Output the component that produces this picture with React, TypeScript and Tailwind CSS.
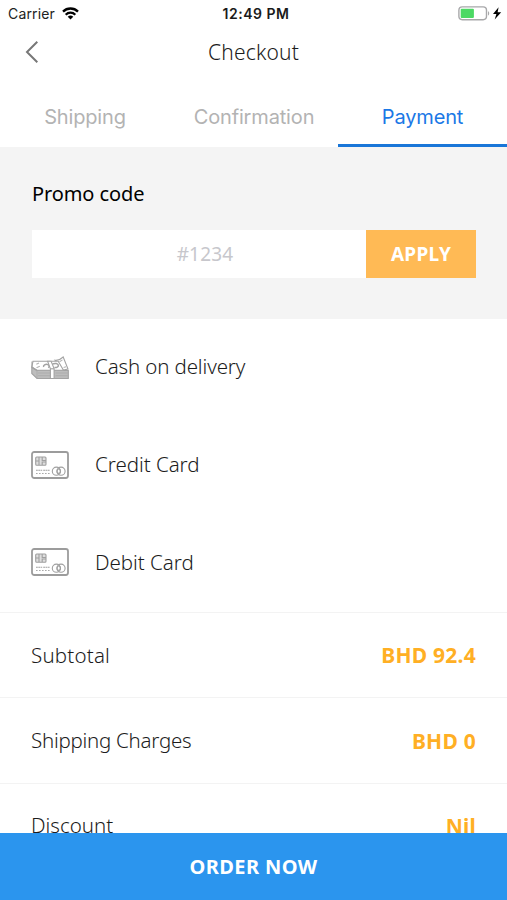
import React from "react";

const paymentMethods = [
  { name: "Cash on delivery", icon: CashIcon, tracking: "tracking-[-0.13px]" },
  { name: "Credit Card", icon: CardIcon, tracking: "tracking-[-0.03px]" },
  { name: "Debit Card", icon: CardIcon, tracking: "tracking-[-0.03px]" },
];

const totals = [
  { label: "Subtotal", value: "BHD 92.4", tracking: "tracking-[0.2px]" },
  { label: "Shipping Charges", value: "BHD 0", tracking: "tracking-[-0.25px]" },
  { label: "Discount", value: "Nil", tracking: "tracking-[0px]" },
];

function WifiIcon() {
  return (
    <svg className="h-[13px] w-[17px]" viewBox="0 0 17 13" fill="none" stroke="#000" strokeWidth="2.3">
      <path d="M1 4.6a10.6 10.6 0 0 1 15 0" />
      <path d="M3.7 7.7a6.8 6.8 0 0 1 9.6 0" />
      <path d="M8.5 12.6 5.7 9.8a4 4 0 0 1 5.6 0z" fill="#000" stroke="none" />
    </svg>
  );
}

function BatteryIcon() {
  return (
    <svg className="h-[16px] w-[44px]" viewBox="0 0 44 16" fill="none">
      <rect x="0.9" y="0.9" width="27.6" height="12.8" rx="3.4" stroke="#a8a8aa" strokeWidth="1.4" />
      <rect x="2.7" y="2.7" width="13.2" height="9.2" rx="1" fill="#4cd964" />
      <path d="M30 5.2c1.6.5 1.6 3.7 0 4.2z" fill="#a8a8aa" />
      <path d="M40.6 1.2 35 8h3.4l-1.7 5.6L43.2 6.3h-3.6z" fill="#000" />
    </svg>
  );
}

function CashIcon() {
  return (
    <svg className="h-[28px] w-[38px]" viewBox="0 0 38 28" fill="none" stroke="#a3a3a3" strokeWidth="1.1">
      <path d="M.8 14.5 6 17.5h31.3v8H6L.8 20.5z" fill="#bdbdbd" />
      <path d="M24 7.3c3.2.4 5.6-.8 8.2-3.3L37 16l-5.6 1.2z" fill="#fff" />
      <path d="M2 8.3h25.2l5.3 9H6L.8 14z" fill="#fff" />
      <path d="M1 8.5v5.8L6 17.5h-.2L1 14.3z" fill="#bdbdbd" />
      <path d="M6 17.5v8M7 20h12M7 22.7h12M24.5 20h12.3M24.5 22.7h12.3" stroke="#aaa" strokeWidth="0.8" />
      <path d="M5.3 11.3 8 10M5.5 14.8l3.3-1.6M28.5 8.7l3-1.8M32.6 14.6l2.5-.8" stroke="#b5b5b5" />
      <path d="M12.6 14c-.5-1.6 1.8-2.9 3.8-2.6 2.1.2 2.5 2.3.8 3.2M21.4 11.2c2.6-1.5 5.7-.7 6 1.2.1 1.4-1.8 2.4-4 2" strokeWidth="1.5" />
      <path d="M16.6 8.3h3.5l3 7.3v9.9h-3.7v-9.7z" fill="#fff" />
      <path d="M19.4 15.8h3.7" />
    </svg>
  );
}

function CardIcon() {
  return (
    <svg className="h-[28px] w-[38px]" viewBox="0 0 38 28" fill="none" stroke="#a0a0a0" strokeWidth="1.1">
      <rect x="1" y="1" width="36" height="26" rx="2.2" stroke="#9c9c9c" strokeWidth="1.8" />
      <rect x="4.7" y="6" width="10.3" height="8.2" rx="1" fill="#dedede" />
      <path d="M4.7 10h3.2M8 6v8M11.2 6v3.5h3.8M11.2 14v-3h3.8" />
      <path d="M5 19.2h6.2M12.2 19.2h6.6" strokeDasharray="1.8 .5" />
      <path d="M5 22.5h14" stroke="#aaa" strokeDasharray="1.6 1.4" />
      <circle cx="25.4" cy="20.2" r="4.1" />
      <circle cx="30" cy="20.2" r="4.1" />
      <ellipse cx="27.7" cy="20.2" rx="1.6" ry="2.2" />
    </svg>
  );
}

export default function App() {
  return (
    <div className="flex h-[900px] w-[507px] flex-col overflow-hidden bg-white font-['Noto_Sans',sans-serif] text-[#1c1c1c]">
      <header className="flex-shrink-0">
        <div className="grid h-[27px] grid-cols-3 items-center pl-[8px] pr-[5px] font-['Inter',sans-serif] text-[14px] text-black">
          <div className="flex items-center gap-[7px]">
            <span className="tracking-[0.15px] text-[#222]">Carrier</span>
            <WifiIcon />
          </div>
          <span className="pl-[2px] text-center font-semibold tracking-[0.5px] text-[#1a1a1a]">12:49 PM</span>
          <div className="flex justify-end">
            <BatteryIcon />
          </div>
        </div>
        <div className="grid h-[50px] grid-cols-3 items-center">
          <button type="button" aria-label="Back" className="pl-[25px]">
            <svg className="h-[24px] w-[14px]" viewBox="0 0 14 24" fill="none" stroke="#777" strokeWidth="2">
              <path d="M12.3 1.8 2 12l10.3 10.2" />
            </svg>
          </button>
          <h1 className="pt-[2px] text-center text-[21px] font-[350] tracking-[0.2px]">Checkout</h1>
        </div>
      </header>

      <nav className="grid h-[70px] flex-shrink-0 grid-cols-3 font-['Inter',sans-serif] text-[20px] tracking-[-0.15px] text-[#b3b3b3]">
        <button type="button" className="pl-[1px] pt-[9px]">Shipping</button>
        <button type="button" className="pl-[1px] pt-[9px]">Confirmation</button>
        <button type="button" className="border-b-[3px] border-[#1976d8] pt-[12px] text-[#1b78e6]">Payment</button>
      </nav>

      <section className="h-[172px] flex-shrink-0 bg-[#f4f4f4] pl-[32px] pr-[31px] pt-[32px]">
        <h2 className="text-[20px] leading-[30px] tracking-[-0.1px] text-black">Promo code</h2>
        <div className="mt-[21px] flex h-[48px]">
          <input
            placeholder="#1234"
            className="min-w-0 flex-1 bg-white pl-[12px] text-center text-[19px] tracking-[0.2px] outline-none placeholder:text-[#c7c7cc]"
          />
          <button type="button" className="w-[110px] bg-[#ffba55] pt-[1px] text-[19px] font-bold tracking-[0.3px] text-white">
            APPLY
          </button>
        </div>
      </section>

      <section className="flex-shrink-0 border-b border-[#f3f3f3]">
        {paymentMethods.map(({ name, icon: Icon, tracking }) => (
          <div key={name} className="flex h-[97.7px] items-center gap-[26px] pb-[2px] pl-[31px]">
            <Icon />
            <span className={`text-[20.5px] font-[350] ${tracking}`}>{name}</span>
          </div>
        ))}
      </section>

      <section className="min-h-0 flex-1 overflow-hidden">
        {totals.map((row) => (
          <div
            key={row.label}
            className="flex h-[85.3px] items-center justify-between border-b border-[#f3f3f3] pl-[31px] pr-[31px]"
          >
            <span className={`text-[20.5px] font-[350] ${row.tracking}`}>{row.label}</span>
            <span className="pt-[2px] text-[21px] font-bold tracking-[0.25px] text-[#ffaf24]">{row.value}</span>
          </div>
        ))}
      </section>

      <button type="button" className="h-[67px] w-full flex-shrink-0 bg-[#2b95ee] pt-[1px] text-[20px] font-bold tracking-[0.4px] text-white">
        ORDER NOW
      </button>
    </div>
  );
}
